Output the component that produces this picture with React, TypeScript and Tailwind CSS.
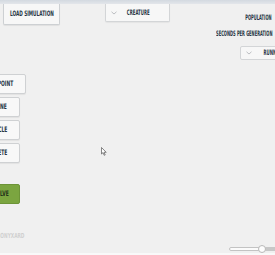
import React from 'react'

const font = { fontFamily: '"DejaVu Sans Condensed", "DejaVu Sans", sans-serif' }

// the reference uses a very narrow display face; squeeze the condensed one to match
function Narrow({
  children,
  origin = 'origin-center',
  squeeze = 'scale-x-[0.69]',
}: {
  children: React.ReactNode
  origin?: string
  squeeze?: string
}) {
  return <span className={`inline-block shrink-0 whitespace-nowrap ${squeeze} ${origin}`}>{children}</span>
}

function Chevron() {
  return (
    <svg width="6" height="4" viewBox="0 0 6 4" className="shrink-0">
      <polyline points="0.5,0.8 3,3 5.5,0.8" fill="none" stroke="#b5b8bb" strokeWidth="0.9" />
    </svg>
  )
}

function SideButton({ label, width, green }: { label: string; width: string; green?: boolean }) {
  return (
    <div
      className={`${width} ml-[-44px] flex h-[20px] items-center justify-end rounded-[2px] border text-[7.5px] font-bold ${
        green
          ? 'border-[#6d9438] bg-[#7ba540] pr-[10px] text-[#24331a]'
          : 'border-[#cfd1d3] bg-[#f8f8f8] pr-[12px] text-[#263544] shadow-[0_1px_1px_rgba(0,0,0,0.06)]'
      }`}
    >
      <Narrow origin="origin-right" squeeze="scale-x-[0.66]">
        {label}
      </Narrow>
    </div>
  )
}

export default function App() {
  return (
    <div className="relative flex h-[255px] w-[275px] flex-col overflow-hidden bg-[#f0f0f0]" style={font}>
      <div className="h-[4px] bg-gradient-to-b from-[#d3d9e0] to-[#e3e6ea]" />

      <div className="flex items-start">
        <div className="ml-[3px] flex h-[21px] w-[57px] shrink-0 items-center justify-center rounded-b-[2px] border border-t-0 border-[#cdd0d3] bg-[#f7f7f7] text-[7.5px] font-bold text-[#263544] shadow-[0_1px_1px_rgba(0,0,0,0.07)]">
          <Narrow squeeze="scale-x-[0.63]">LOAD SIMULATION</Narrow>
        </div>

        <div className="ml-[45px] flex h-[18px] w-[65px] shrink-0 items-center rounded-b-[2px] border border-t-0 border-[#d3d5d7] bg-[#f7f7f7] pl-[5px] text-[7.5px] font-bold text-[#263544] shadow-[0_1px_1px_rgba(0,0,0,0.05)]">
          <Chevron />
          <Narrow origin="origin-left" squeeze="scale-x-[0.58]">
            <span className="ml-[17px]">CREATURE</span>
          </Narrow>
        </div>

        <div className="ml-auto flex w-[70px] shrink-0 flex-col items-end pr-[3px] text-[7.5px] font-bold text-[#263544]">
          <div className="mt-[9px] flex w-full justify-end leading-[9px]">
            <Narrow origin="origin-right" squeeze="scale-x-[0.54]">
              POPULATION
            </Narrow>
          </div>
          <div className="mt-[7px] flex w-full justify-end leading-[9px]">
            <Narrow origin="origin-right" squeeze="scale-x-[0.54]">
              SECONDS PER GENERATION
            </Narrow>
          </div>
          <div className="mr-[-30px] mt-[8px] flex h-[14px] w-[62px] items-center rounded-[2px] border border-[#d3d5d7] bg-[#f7f7f7] pl-[5px]">
            <Chevron />
            <Narrow origin="origin-left" squeeze="scale-x-[0.58]">
              <span className="ml-[20px]">RUNNING</span>
            </Narrow>
          </div>
        </div>
      </div>

      <div className="mt-[14px] flex flex-col gap-[3px]">
        <SideButton label="ADD POINT" width="w-[70px]" />
        <SideButton label="ADD LINE" width="w-[64px]" />
        <SideButton label="ADD CIRCLE" width="w-[64px]" />
        <SideButton label="DELETE" width="w-[64px]" />
      </div>

      <div className="mt-[21px]">
        <SideButton label="SOLVE" width="w-[64px]" green />
      </div>

      <div className="ml-[-3px] mt-[28px] text-[7px] font-bold leading-[8px] text-[#d0d0d0]">
        <Narrow origin="origin-left">BONYXARD</Narrow>
      </div>

      <div className="mt-[7px] flex items-center self-end">
        <div className="relative flex h-[4px] w-[46px] items-center">
          <div className="h-[4px] w-[33px] rounded-l-full border border-[#c3c3c3] bg-[#fbfbfb]" />
          <div className="h-[4px] flex-1 bg-[#c7c7c7]" />
          <div className="absolute left-[29px] top-[-2px] h-[8px] w-[8px] rounded-full border border-[#b9b9b9] bg-[#fdfdfd]" />
        </div>
      </div>

      <div className="mt-auto h-[2px] bg-[#f9f9f9]" />

      <svg className="absolute left-[101px] top-[147px]" width="6" height="9" viewBox="0 0 6 9">
        <path d="M0.5 0.5 L0.5 7 L2 5.6 L3.2 8.3 L4.2 7.9 L3 5.3 L5.2 5.3 Z" fill="#fff" stroke="#555" strokeWidth="0.7" />
      </svg>
    </div>
  )
}
